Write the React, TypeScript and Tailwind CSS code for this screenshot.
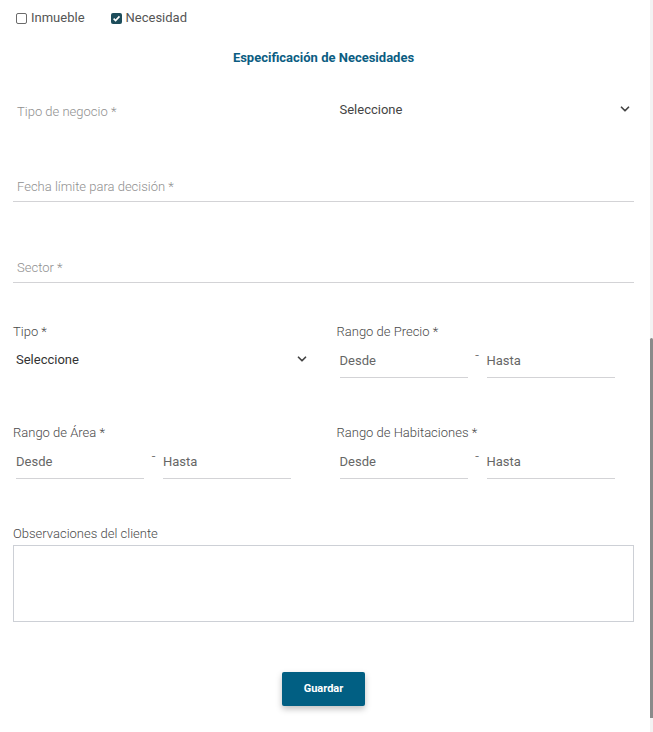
import { ChevronDown } from 'lucide-react';

function Check({ checked, label }: { checked?: boolean; label: string }) {
    return (
        <label className="flex items-center gap-[4px]">
            {checked ? (
                <span className="w-[11px] h-[11px] rounded-[2px] bg-[#1d4d5b] flex items-center justify-center">
                    <svg width="9" height="9" viewBox="0 0 10 10">
                        <path d="M1.8 5.2 L4 7.4 L8.3 2.6" fill="none" stroke="#fff" strokeWidth="1.8" />
                    </svg>
                </span>
            ) : (
                <span className="w-[11px] h-[11px] rounded-[2px] border border-[#6b6b6b] bg-white" />
            )}
            <span>{label}</span>
        </label>
    );
}

function Range() {
    return (
        <div className="flex ml-[3px] mt-[13px]">
            <div className="w-[128px] border-b border-[#d3d3d6] pb-[8px] text-[#666] leading-[16px]">Desde</div>
            <div className="w-[19px] flex justify-center text-[#777] leading-[10px] -mt-[3px]">-</div>
            <div className="w-[128px] border-b border-[#d3d3d6] pb-[8px] text-[#666] leading-[16px]">Hasta</div>
        </div>
    );
}

export default function App() {
    return (
        <div className="flex w-[653px] h-[732px] overflow-hidden bg-white text-[13px]" style={{ fontFamily: 'Roboto, "Liberation Sans", sans-serif' }}>
            <div className="flex-1 flex flex-col pl-[13px] pr-[16px]">
                <div className="flex gap-[26px] pt-[10px] pl-[3px] leading-[16px] text-[#555]">
                    <Check label="Inmueble" />
                    <Check checked label="Necesidad" />
                </div>

                <h2 className="mt-[24px] text-center font-bold leading-[16px] text-[#0b5d82]">Especificación de Necesidades</h2>

                <div className="grid grid-cols-2 gap-x-[26px] mt-[33px]">
                    <div className="pl-[4px] pt-[5px] leading-[16px] font-light text-[#8f8f8f]">Tipo de negocio *</div>
                    <div className="flex items-center justify-between pl-[3px] pr-[2px] leading-[16px] text-[#444]">
                        <span>Seleccione</span>
                        <ChevronDown size={14} strokeWidth={3} className="text-[#444] -mt-[1px]" />
                    </div>
                </div>

                <div className="mt-[59px] pl-[4px] pb-[6px] leading-[16px] font-light text-[#8f8f8f] border-b border-[#d3d3d6]">Fecha límite para decisión *</div>
                <div className="mt-[58px] pl-[4px] pb-[6px] leading-[16px] font-light text-[#8f8f8f] border-b border-[#d3d3d6]">Sector *</div>

                <div className="grid grid-cols-2 gap-x-[26px] mt-[41px]">
                    <div>
                        <div className="leading-[16px] text-[#4a4a4a] font-light">Tipo *</div>
                        <div className="flex items-center justify-between pl-[3px] pr-[2px] mt-[12px] leading-[16px] text-[#333]">
                            <span>Seleccione</span>
                            <ChevronDown size={14} strokeWidth={3} className="text-[#444] -mt-[3px]" />
                        </div>
                    </div>
                    <div>
                        <div className="leading-[16px] text-[#4a4a4a] font-light">Rango de Precio *</div>
                        <Range />
                    </div>
                </div>

                <div className="grid grid-cols-2 gap-x-[26px] mt-[47px]">
                    <div>
                        <div className="leading-[16px] text-[#4a4a4a] font-light">Rango de Área *</div>
                        <Range />
                    </div>
                    <div>
                        <div className="leading-[16px] text-[#4a4a4a] font-light">Rango de Habitaciones *</div>
                        <Range />
                    </div>
                </div>

                <div className="mt-[47px] leading-[16px] text-[#4a4a4a] font-light">Observaciones del cliente</div>
                <textarea className="mt-[3px] h-[77px] w-full border border-[#cdd0d6] resize-none outline-none" />

                <div className="flex justify-center mt-[50px]">
                    <button className="w-[83px] h-[34px] rounded-[2px] bg-[#015f83] text-white text-[11px] font-bold shadow-[0_3px_6px_rgba(0,0,0,0.25)]">
                        Guardar
                    </button>
                </div>
            </div>
            <div className="w-[3px] bg-[#f3f3f3] flex flex-col pt-[338px]">
                <div className="h-[380px] bg-[#8a8a8a] rounded-t-[2px]" />
            </div>
        </div>
    );
}
